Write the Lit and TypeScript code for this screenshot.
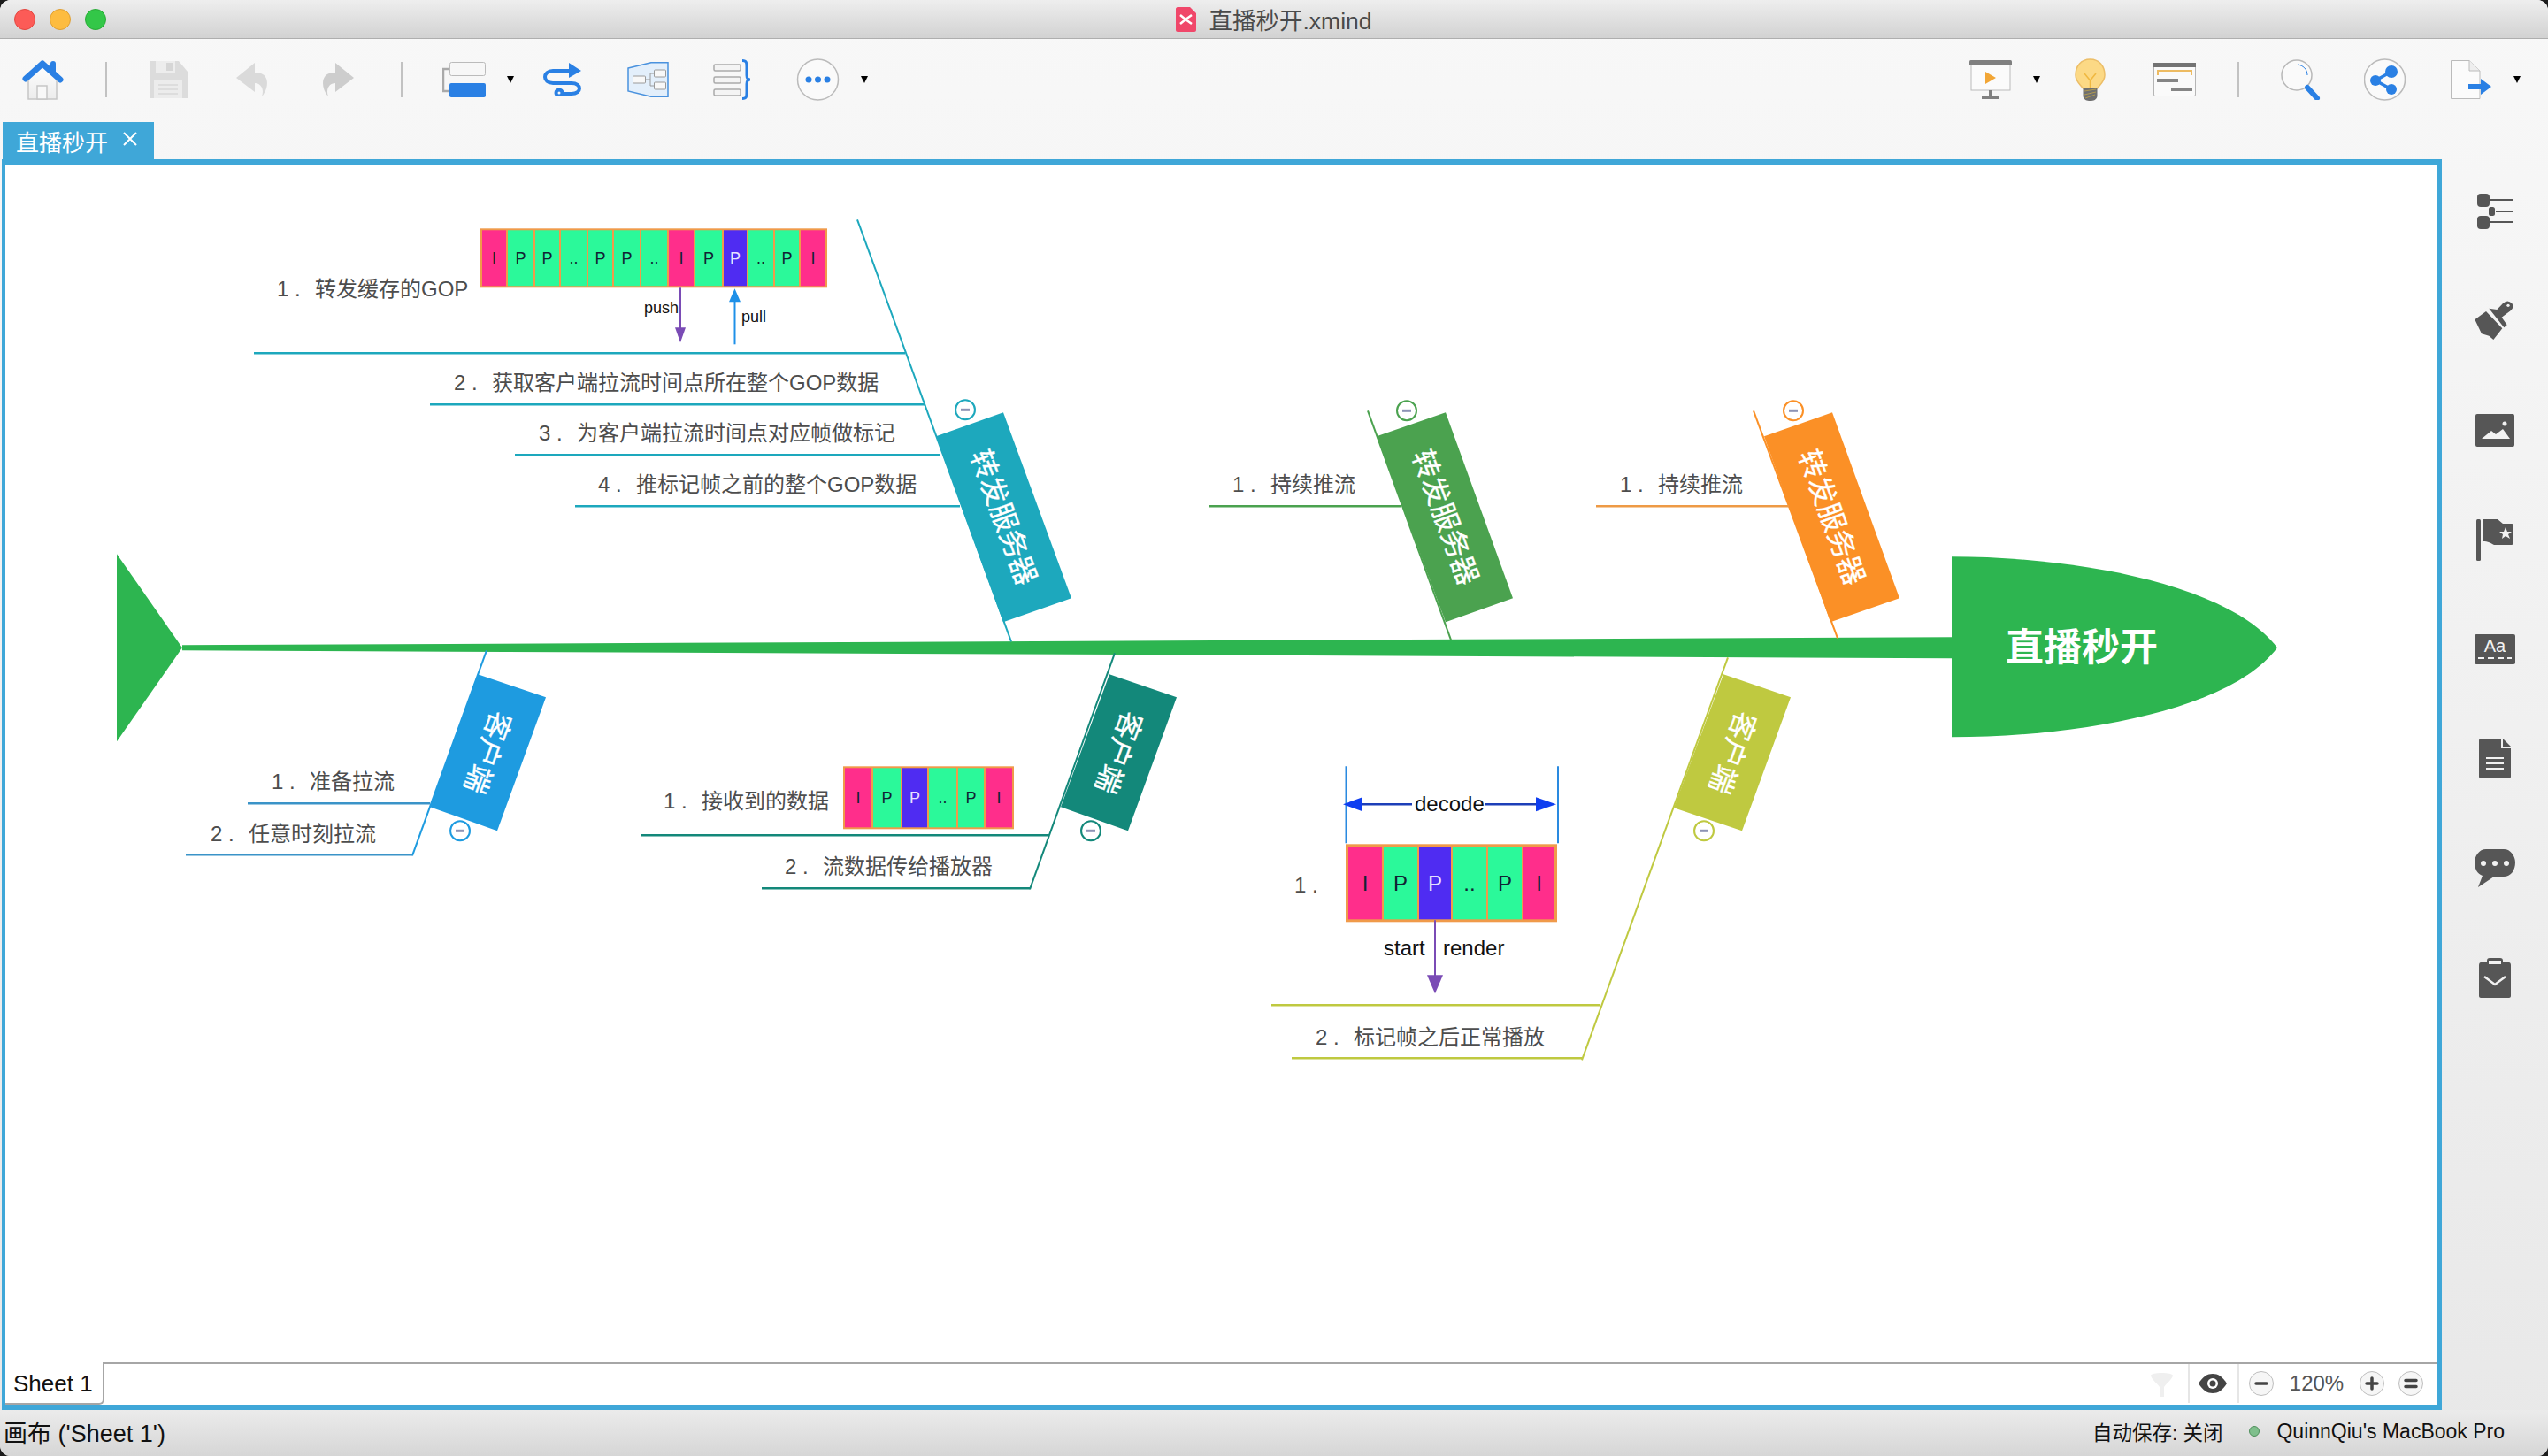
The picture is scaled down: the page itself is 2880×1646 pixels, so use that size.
import { LitElement, html, svg, css } from 'lit';
import { customElement } from 'lit/decorators.js';

const BLUE = '#2a80e4';
const caret = svg`<svg width="8" height="8" viewBox="0 0 8 8"><path d="M0 0H8L4 8Z" fill="#000"/></svg>`;
const sep = html`<div class="sep"></div>`;

const homeIcon = svg`<svg width="49" height="46" viewBox="0 0 49 46">
  <defs><linearGradient id="hb" x1="0" y1="0" x2="0" y2="1"><stop offset="0" stop-color="#fff"/><stop offset="1" stop-color="#ececec"/></linearGradient></defs>
  <path d="M7 18 23 5 39 18V45H7Z" fill="url(#hb)" stroke="#c6c6c6" stroke-width="1.500"/>
  <rect x="17" y="30" width="11" height="15" fill="#f8f8f8" stroke="#c6c6c6" stroke-width="1.500"/>
  <path d="M35 5V14" stroke="${BLUE}" stroke-width="6" stroke-linecap="round"/>
  <path d="M4 22 23 5 43 23" fill="none" stroke="${BLUE}" stroke-width="7" stroke-linecap="round" stroke-linejoin="round"/>
</svg>`;
const saveIcon = svg`<svg width="44" height="42" viewBox="0 0 44 42">
  <path d="M1 0H34L44 12V42H1Z" fill="#dcdcdc"/>
  <rect x="8" y="0" width="22" height="13" fill="#ededed"/><rect x="20" y="2" width="7" height="9" fill="#d6d6d6"/>
  <rect x="6" y="21" width="32" height="21" fill="#ececec"/>
  <path d="M11 27H33M11 32H33M11 37H33" stroke="#d8d8d8" stroke-width="1.5"/>
</svg>`;
const undoIcon = svg`<svg width="38" height="38" viewBox="0 0 38 38"><path d="M21 0 0 17 21 33V23C28 23 32 30 29 38 38 28 38 10 21 11Z" fill="#dadada"/></svg>`;
const redoIcon = svg`<svg width="37" height="38" viewBox="0 0 37 38"><path d="M16 0 37 17 16 33V23C9 23 5 30 8 38-1 28-1 10 16 11Z" fill="#cdcdcd"/></svg>`;
const topicIcon = svg`<svg width="49" height="40" viewBox="0 0 49 40">
  <path d="M8 8H1V33H8" fill="none" stroke="#aaa" stroke-width="2.5"/>
  <rect x="8.5" y="0.5" width="40" height="15" rx="2" fill="#f7f7f7" stroke="#bbb"/>
  <rect x="8" y="24" width="41" height="16" rx="2" fill="${BLUE}"/>
</svg>`;
const relIcon = svg`<svg width="44" height="38" viewBox="0 0 44 38" fill="none" stroke="${BLUE}" stroke-width="4">
  <path d="M30 9H11C-1 9-1 23 11 23H32C44 23 44 35 32 35H22"/><circle cx="18" cy="34" r="3.5"/>
  <path d="M29 0 43 9 29 17Z" fill="${BLUE}" stroke="none"/>
</svg>`;
const boundaryIcon = svg`<svg width="47" height="40" viewBox="0 0 47 40">
  <path d="M1 7 27 .7H46V39.3H27L1 33Z" fill="#e3effb" stroke="#4a92de" stroke-width="1.5"/>
  <g fill="#f8f8f8" stroke="#9a9a9a"><rect x="6.500" y="16" width="14" height="8" rx="1"/><rect x="30.500" y="9" width="13" height="8" rx="1"/><rect x="30.500" y="23" width="13" height="8" rx="1"/></g>
  <path d="M21 20H26M26 13V27M26 13H30M26 27H30" fill="none" stroke="#9a9a9a"/>
</svg>`;
const summaryIcon = svg`<svg width="43" height="46" viewBox="0 0 43 46">
  <g fill="#f4f4f4" stroke="#aaa" stroke-width="1.5"><rect x="1" y="6" width="30" height="7" rx="1.500"/><rect x="1" y="20" width="30" height="7" rx="1.500"/><rect x="1" y="34" width="30" height="7" rx="1.500"/></g>
  <path d="M33 1.500C38 1.500 38 4 38 9V18C38 21 39 23 42 23 39 23 38 25 38 28V37C38 42 38 44.500 33 44.500" fill="none" stroke="${BLUE}" stroke-width="3"/>
</svg>`;
const moreIcon = svg`<svg width="49" height="48" viewBox="0 0 49 48">
  <circle cx="24.500" cy="24" r="23" fill="#fafafa" stroke="#bbb" stroke-width="1.500"/>
  <g fill="${BLUE}"><circle cx="14" cy="24" r="3.500"/><circle cx="24.500" cy="24" r="3.500"/><circle cx="35" cy="24" r="3.500"/></g>
</svg>`;
const presentIcon = svg`<svg width="48" height="44" viewBox="0 0 48 44">
  <rect x="2" y="4" width="44" height="30" fill="#fbfbfb" stroke="#bbb"/><rect width="48" height="6" rx="1.500" fill="#808080"/>
  <path d="M18 13 30 20 18 27Z" fill="#f2a636"/><path d="M22 34H26V41H22ZM14 41H34V44H14Z" fill="#808080"/>
</svg>`;
const bulbIcon = svg`<svg width="35" height="48" viewBox="0 0 35 48">
  <path d="M17.500 1C7 1 1 9 1 19 1 26 6 29 9.500 34H25.500C29 29 34 26 34 19 34 9 28 1 17.500 1Z" fill="#fcd985" stroke="#ecbe68" stroke-width="1.500"/>
  <path d="M11 17 17.500 25 24 17M17.500 25V34" fill="none" stroke="#f0b840" stroke-width="1.500"/>
  <path d="M9.500 34H25.500V42C25.500 47 21 48 17.500 48 14 48 9.500 47 9.500 42Z" fill="#6f6f6f"/>
  <path d="M11 37 24 35M11 41 24 38M12 45 23 41" stroke="#b09a50" stroke-width="1"/>
</svg>`;
const outlineIcon = svg`<svg width="48" height="38" viewBox="0 0 48 38">
  <rect x=".5" y=".5" width="47" height="37" rx="1.500" fill="#fafafa" stroke="#b5b5b5"/><rect width="48" height="5" fill="#737373"/>
  <path d="M5 14V9H43V14" fill="none" stroke="#edbb62" stroke-width="2"/>
  <rect x="4" y="18" width="24" height="4" fill="#858585"/><rect x="20" y="28" width="24" height="4" fill="#858585"/>
</svg>`;
const searchIcon = svg`<svg width="45" height="46" viewBox="0 0 45 46">
  <circle cx="18" cy="18" r="17" fill="#fafafa" stroke="#b8b8b8" stroke-width="1.500"/>
  <path d="M19 6C25 7 30 11 30 18" fill="none" stroke="${BLUE}" stroke-width="1"/>
  <path d="M30 32 41 44" stroke="${BLUE}" stroke-width="6" stroke-linecap="round"/>
</svg>`;
const shareIcon = svg`<svg width="47" height="48" viewBox="0 0 47 48">
  <circle cx="23.500" cy="24" r="23" fill="#fafafa" stroke="#bbb" stroke-width="1.500"/>
  <g fill="${BLUE}"><circle cx="31" cy="15" r="7"/><circle cx="13" cy="25" r="6"/><circle cx="31" cy="35" r="6"/></g>
  <path d="M31 15 13 25 31 35" fill="none" stroke="${BLUE}" stroke-width="3.500"/>
</svg>`;
const exportIcon = svg`<svg width="46" height="44" viewBox="0 0 46 44">
  <path d="M.5 .5H21L33 12V43.500H.5Z" fill="#fbfbfb" stroke="#bbb"/><path d="M21 .5V12H33" fill="#eee" stroke="#bbb"/>
  <path d="M20 27H34V21L46 30 34 39V33H20Z" fill="${BLUE}"/>
</svg>`;

const leftTools = [
  { gap: 25, el: homeIcon }, { gap: 45, el: sep }, { gap: 47, el: saveIcon }, { gap: 55, el: undoIcon },
  { gap: 58, el: redoIcon }, { gap: 53, el: sep }, { gap: 45, el: topicIcon }, { gap: 24, el: caret },
  { gap: 33, el: relIcon }, { gap: 51, el: boundaryIcon }, { gap: 50, el: summaryIcon },
  { gap: 51, el: moreIcon }, { gap: 24, el: caret },
];
const rightTools = [
  { gap: 0, el: presentIcon }, { gap: 24, el: caret }, { gap: 39, el: bulbIcon }, { gap: 54, el: outlineIcon },
  { gap: 47, el: sep }, { gap: 47, el: searchIcon }, { gap: 49, el: shareIcon }, { gap: 51, el: exportIcon },
  { gap: 25, el: caret },
];

const DK = '#565656';
const sideIcons = [
  svg`<svg width="40" height="40" viewBox="0 0 40 40" fill="${DK}">
    <rect y="0" width="14" height="15" rx="4"/><rect y="25" width="14" height="15" rx="4"/><rect x="13" y="15" width="7" height="10" rx="2.500"/>
    <path d="M15 6H40V8H15ZM21 19H40V21H21ZM15 31H40V33H15Z"/></svg>`,
  svg`<svg width="70" height="70" viewBox="0 0 210 210" fill="${DK}">
    <path d="M37 100 75 72 130 130 100 168 85 155 60 148Z"/>
    <path d="M85 62 112 66 132 45Q148 30 163 45 172 58 158 70L128 92 146 118 136 127Z"/>
    <circle cx="150" cy="52" r="5" fill="#f2f2f2"/></svg>`,
  svg`<svg width="44" height="37" viewBox="0 0 44 37"><rect width="44" height="37" rx="2" fill="${DK}"/>
    <path d="M7 28 18 19 23 23 31 17 39 28Z" fill="#f2f2f2"/><circle cx="33" cy="11" r="2.500" fill="#f2f2f2"/></svg>`,
  svg`<svg width="42" height="47" viewBox="0 0 42 47" fill="${DK}"><rect width="5" height="47" rx="1.500"/>
    <path d="M7 0H24L30 5H40C42 5 42 6 42 8V26C42 28 41 29 40 29H20C16 27 14 25 7 25Z"/>
    <path d="M33 9 35 14H40L36 17 38 22 33 19 29 22 30 17 26 14H31Z" fill="#f2f2f2"/></svg>`,
  svg`<svg width="46" height="34" viewBox="0 0 46 34"><rect width="46" height="34" rx="2" fill="${DK}"/>
    <text x="23" y="20" text-anchor="middle" class="aa">Aa</text>
    <path d="M4 27H42" stroke="#f2f2f2" stroke-width="2" stroke-dasharray="7 4"/></svg>`,
  svg`<svg width="36" height="45" viewBox="0 0 36 45"><path d="M2 0H25V11H36V43C36 44 35 45 34 45H2C1 45 0 44 0 43V2C0 1 1 0 2 0Z" fill="${DK}"/>
    <path d="M27 0 36 9H27Z" fill="${DK}"/><path d="M8 22H28M8 28H28M8 34H28" stroke="#f2f2f2" stroke-width="2"/></svg>`,
  svg`<svg width="46" height="43" viewBox="0 0 46 43"><path d="M13 0H33C41 0 46 8 46 15 46 24 41 31 33 31H22L4 43 9 30C3 28 0 22 0 15 0 8 5 0 13 0Z" fill="${DK}"/>
    <circle cx="10" cy="16" r="3" fill="#f2f2f2"/><circle cx="23" cy="16" r="3" fill="#f2f2f2"/><circle cx="36" cy="16" r="3" fill="#f2f2f2"/></svg>`,
  svg`<svg width="36" height="45" viewBox="0 0 36 45"><path d="M2 5H9V3C9 1 10 0 12 0H24C26 0 27 1 27 3V5H34C35 5 36 6 36 8V43C36 44 35 45 34 45H2C1 45 0 44 0 43V8C0 6 1 5 2 5Z" fill="${DK}"/>
    <rect x="11" y="3" width="14" height="4" fill="#f2f2f2"/><path d="M6 21 18 30 30 21" fill="none" stroke="#f2f2f2" stroke-width="2.500"/></svg>`,
];

const funnelIcon = svg`<svg width="27" height="27" viewBox="0 0 27 27"><path d="M1 3C1-1 26-1 26 3 26 6 17 14 16 16V27H11V16C10 14 1 6 1 3Z" fill="#efefef"/></svg>`;
const eyeIcon = svg`<svg width="32" height="22" viewBox="0 0 32 22"><path d="M0 11C5 3 10 0 16 0 22 0 27 3 32 11 27 19 22 22 16 22 10 22 5 19 0 11Z" fill="#444"/>
  <circle cx="16" cy="11" r="6" fill="#fff"/><circle cx="16" cy="11" r="3.500" fill="#444"/></svg>`;
const zoomBtn = (d: string) => svg`<svg width="28" height="28" viewBox="0 0 28 28"><circle cx="14" cy="14" r="13.500" fill="#f6f6f6" stroke="#bdbdbd"/>
  <path d="${d}" stroke="#444" stroke-width="3.500" stroke-linecap="round"/></svg>`;

type Item = { n: string; x: number; y: number; t: string };
type Seg = [number, number, number];
type Bone = {
  color: string; line?: string; spine: number[]; quad: number[][]; dot: number[];
  label: string; size: number; angle: number; segs: Seg[]; items: Item[];
};

const bones: Bone[] = [
  {
    color: '#1da8bd', spine: [968, 248, 1142, 725], quad: [[1057, 493], [1133, 466], [1210, 676], [1133, 703]], dot: [1090, 463],
    label: '转发服务器', size: 32, angle: 70,
    segs: [[286, 1022, 399], [485, 1044, 457], [581, 1062, 514], [649, 1084, 572]],
    items: [
      { n: '1', x: 312, y: 326, t: '转发缓存的GOP' },
      { n: '2', x: 512, y: 432, t: '获取客户端拉流时间点所在整个GOP数据' },
      { n: '3', x: 608, y: 489, t: '为客户端拉流时间点对应帧做标记' },
      { n: '4', x: 675, y: 547, t: '推标记帧之前的整个GOP数据' },
    ],
  },
  {
    color: '#4ba24f', spine: [1545, 464, 1639, 723], quad: [[1555, 493], [1633, 466], [1709, 676], [1633, 703]], dot: [1589, 464],
    label: '转发服务器', size: 32, angle: 70, segs: [[1366, 1583, 572]],
    items: [{ n: '1', x: 1392, y: 547, t: '持续推流' }],
  },
  {
    color: '#fb9026', line: '#ee9a45', spine: [1981, 464, 2076, 721], quad: [[1993, 493], [2070, 466], [2146, 676], [2068, 703]], dot: [2026, 464],
    label: '转发服务器', size: 32, angle: 70, segs: [[1803, 2021, 572]],
    items: [{ n: '1', x: 1830, y: 547, t: '持续推流' }],
  },
  {
    color: '#1e9be0', line: '#3a93c8', spine: [549, 735, 465, 967], quad: [[539, 762], [616, 788], [561, 939], [485, 912]], dot: [519, 939],
    label: '客户端', size: 32, angle: 110, segs: [[279, 485, 908], [209, 465, 966]],
    items: [{ n: '1', x: 306, y: 883, t: '准备拉流' }, { n: '2', x: 237, y: 942, t: '任意时刻拉流' }],
  },
  {
    color: '#13887a', spine: [1259, 738, 1163, 1005], quad: [[1253, 762], [1329, 788], [1274, 939], [1198, 912]], dot: [1232, 939],
    label: '客户端', size: 32, angle: 110, segs: [[723, 1185, 944], [860, 1163, 1004]],
    items: [{ n: '1', x: 749, y: 905, t: '接收到的数据' }, { n: '2', x: 886, y: 979, t: '流数据传给播放器' }],
  },
  {
    color: '#bfc940', spine: [1952, 743, 1787, 1198], quad: [[1947, 762], [2023, 788], [1968, 939], [1891, 913]], dot: [1925, 939],
    label: '客户端', size: 32, angle: 110, segs: [[1436, 1808, 1136], [1459, 1787, 1196]],
    items: [{ n: '1', x: 1462, y: 1000, t: '' }, { n: '2', x: 1486, y: 1172, t: '标记帧之后正常播放' }],
  },
];

const frames = (x: number, y: number, h: number, edges: number[], labels: string[], fs: number, bw: number) => svg`
  <rect x="${x}" y="${y}" width="${edges[edges.length - 1] - x}" height="${h}" fill="#f09a4a"/>
  ${labels.map((l, i) => {
    const fill = l === 'I' ? '#ff2e8b' : l === 'B' ? '#4f2cf2' : '#2bf99a';
    const x0 = edges[i] + (i === 0 ? bw : 1);
    const x1 = edges[i + 1] - (i === labels.length - 1 ? bw : 1);
    return svg`<rect x="${x0}" y="${y + bw}" width="${x1 - x0}" height="${h - bw * 2}" fill="${fill}"/>
      <text class="cell" x="${(x0 + x1) / 2}" y="${y + h / 2}" font-size="${fs}" fill="${l === 'B' ? '#e6e0ff' : '#123'}">${l === 'B' ? 'P' : l}</text>`;
  })}`;

@customElement('app-root')
export class AppRoot extends LitElement {
  static override styles = css`
    :host {
      display: block;
      width: 2880px;
      height: 1646px;
      background: #1c1c1c;
      font-family: 'Liberation Sans', 'Noto Sans CJK SC', sans-serif;
    }
    .window {
      height: 100%;
      display: flex;
      flex-direction: column;
      border-radius: 12px;
      overflow: hidden;
      background: linear-gradient(#f8f8f8, #e8e8e8);
    }
    .titlebar {
      height: 43px;
      flex: none;
      display: flex;
      align-items: center;
      justify-content: center;
      gap: 14px;
      position: relative;
      background: linear-gradient(#eeeeee, #d2d2d2);
      border-bottom: 1px solid #aeaeae;
      font-size: 26.5px;
      color: #4a4a4a;
    }
    .lights {
      position: absolute;
      left: 16px;
      top: 10px;
      display: flex;
      gap: 16px;
    }
    .lights i {
      width: 24px;
      height: 24px;
      border-radius: 50%;
      box-sizing: border-box;
    }
    .red { background: #fc5b57; border: 1px solid #e2463f; }
    .amber { background: #fdbc40; border: 1px solid #de9f34; }
    .green { background: #33c748; border: 1px solid #27aa35; }
    .toolbar {
      height: 92px;
      flex: none;
      display: flex;
      align-items: center;
      justify-content: space-between;
      padding-right: 31px;
    }
    .group {
      display: flex;
      align-items: center;
    }
    .group svg, .side svg, .sheet svg { display: block; }
    .sep {
      width: 2px;
      height: 40px;
      background: #c2c2c2;
    }
    .main {
      flex: 1;
      display: flex;
      min-height: 0;
    }
    .work {
      width: 2760px;
      flex: none;
      display: flex;
      flex-direction: column;
      padding-left: 2px;
      box-sizing: border-box;
    }
    .tab {
      align-self: flex-start;
      margin: 2px 0 0 1px;
      width: 171px;
      height: 42px;
      box-sizing: border-box;
      background: #3fa7d8;
      color: #fff;
      font-size: 26px;
      display: flex;
      align-items: center;
      padding-left: 15px;
      gap: 17px;
    }
    .tab svg { margin-top: -4px; }
    .frame {
      flex: 1;
      display: flex;
      flex-direction: column;
      background: #fff;
      border: 6px solid #3fa7d8;
      border-left-width: 4px;
      min-height: 0;
    }
    .canvas {
      display: block;
      flex: 1;
      min-height: 0;
    }
    .sheet {
      height: 48px;
      flex: none;
      display: flex;
      align-items: stretch;
      box-sizing: border-box;
      border-top: 2px solid #a6a6a6;
    }
    .sheet-tab {
      width: 112px;
      margin-top: -2px;
      background: #fff;
      box-sizing: border-box;
      border-right: 2px solid #a6a6a6;
      border-bottom: 2px solid #a6a6a6;
      border-bottom-right-radius: 6px;
      font-size: 26px;
      color: #111;
      padding: 9px 0 0 9px;
    }
    .sheet-rest {
      flex: 1;
      display: flex;
      align-items: center;
      justify-content: flex-end;
    }
    .cellbox {
      height: 44px;
      align-self: flex-start;
      display: flex;
      align-items: center;
      justify-content: center;
      border-left: 2px solid #e6e6e6;
      box-sizing: border-box;
    }
    .eye { width: 56px; padding-right: 2px; }
    .zoom { width: 225px; justify-content: flex-start; padding-left: 11px; }
    .pct { width: 97px; text-align: center; font-size: 24px; color: #555; }
    .zoom svg:last-child { margin-left: 16px; }
    .side {
      flex: 1;
      padding-top: 41px;
    }
    .side div {
      height: 123.8px;
      display: flex;
      align-items: center;
      justify-content: center;
    }
    .status {
      height: 52px;
      flex: none;
      display: flex;
      align-items: center;
      justify-content: space-between;
      padding: 0 49px 4px 4px;
      box-sizing: border-box;
      background: linear-gradient(#ebebeb, #d6d6d6);
      font-size: 23px;
      color: #111;
    }
    .status .canvas-name { font-size: 27px; }
    .status-right {
      display: flex;
      align-items: center;
    }
    .autosave { font-size: 22.500px; }
    .dot {
      width: 12px;
      height: 12px;
      margin: 0 19px 0 30px;
      border-radius: 50%;
      background: #7fbf8c;
      border: 1px solid #4f8f5c;
      box-sizing: border-box;
    }
    text { font-family: 'Liberation Sans', 'Noto Sans CJK SC', sans-serif; }
    .aa { font-size: 20px; fill: #f2f2f2; }
    .item { font-size: 24px; fill: #4d4d4d; dominant-baseline: central; }
    .label { fill: #fff; stroke: #fff; stroke-width: 0.3px; text-anchor: middle; dominant-baseline: central; }
    .cell { text-anchor: middle; dominant-baseline: central; }
    .note { font-size: 18px; fill: #111; dominant-baseline: central; }
    .note.big { font-size: 24px; }
    .center { font-size: 43px; font-weight: 700; fill: #fff; dominant-baseline: central; }
  `;

  private renderBone(b: Bone) {
    const ln = b.line ?? b.color;
    const [cx, cy] = [
      b.quad.reduce((s, p) => s + p[0], 0) / 4,
      b.quad.reduce((s, p) => s + p[1], 0) / 4,
    ];
    return svg`
      <line x1="${b.spine[0]}" y1="${b.spine[1]}" x2="${b.spine[2]}" y2="${b.spine[3]}" stroke="${b.color}" stroke-width="2"/>
      ${b.segs.map(([x1, x2, y]) => svg`<line x1="${x1}" x2="${x2}" y1="${y}" y2="${y}" stroke="${ln}" stroke-width="2.500"/>`)}
      <polygon points="${b.quad.map((p) => p.join(',')).join(' ')}" fill="${b.color}"/>
      <text class="label" font-size="${b.size}" transform="translate(${cx} ${cy}) rotate(${b.angle})">${b.label}</text>
      <circle cx="${b.dot[0]}" cy="${b.dot[1]}" r="11" fill="#fff" stroke="${b.color}" stroke-width="2"/>
      <path d="M${b.dot[0] - 5} ${b.dot[1]}h10" stroke="#8d93b5" stroke-width="3"/>
      ${b.items.map((it) => svg`<text class="item" x="${it.x}" y="${it.y}">${it.n} .</text>
        ${it.t ? svg`<text class="item" x="${it.x + 43}" y="${it.y}">${it.t}</text>` : ''}`)}
    `;
  }

  private renderDiagram() {
    // viewBox is in window coordinates, nudged to line up with the map's own origin
    return svg`<svg class="canvas" viewBox="5 185.700 2748 1354" preserveAspectRatio="xMinYMin">
      <polygon points="131,626 205,732 131,838" fill="#2db550"/>
      <polygon points="205,729 2205,720 2205,744 205,735" fill="#2db550"/>
      ${bones.map((b) => this.renderBone(b))}
      <path d="M2205 629C2344 629 2519 660 2573 732 2519 804 2344 833 2205 833Z" fill="#2db550"/>
      <text class="center" x="2266" y="732">直播秒开</text>

      ${frames(542, 258, 67, [542, 572, 603, 632, 663, 692, 723, 754, 784, 816, 844, 874, 903, 934],
        ['I', 'P', 'P', '..', 'P', 'P', '..', 'I', 'P', 'B', '..', 'P', 'I'], 18, 2)}
      <path d="M768 325V372" stroke="#7a4bb5" stroke-width="2"/><path d="M762 370H774L768 387Z" fill="#7a4bb5"/>
      <text class="note" x="727" y="348">push</text>
      <path d="M829.500 389V340" stroke="#1e90e8" stroke-width="2"/><path d="M823 341H836L829.500 326Z" fill="#1e90e8"/>
      <text class="note" x="837" y="358">pull</text>

      ${frames(952, 866, 71, [952, 985, 1018, 1048, 1081, 1112, 1145], ['I', 'P', 'B', '..', 'P', 'I'], 18, 2)}

      ${frames(1520, 954, 88, [1520, 1562, 1602, 1640, 1680, 1720, 1759], ['I', 'P', 'B', '..', 'P', 'I'], 24, 3)}
      <path d="M1520.500 866V953M1760 866V953" stroke="#2a8ae0" stroke-width="2"/>
      <path d="M1539 909H1595M1678 909H1736" stroke="#1d3fb8" stroke-width="2.500"/>
      <path d="M1517 909 1539 901V917ZM1758 909 1735 901V917Z" fill="#0f3ef0"/>
      <text class="note big" x="1598" y="908">decode</text>
      <path d="M1621 1040V1104" stroke="#7a4bb5" stroke-width="2"/><path d="M1612 1102H1630L1621 1123Z" fill="#7a4bb5"/>
      <text class="note big" x="1563" y="1071">start</text>
      <text class="note big" x="1630" y="1071">render</text>
    </svg>`;
  }

  override render() {
    return html`
      <div class="window">
        <div class="titlebar">
          <div class="lights"><i class="red"></i><i class="amber"></i><i class="green"></i></div>
          <svg width="23" height="28" viewBox="0 0 23 28"><path d="M2 0H16L23 7V26C23 27 22 28 21 28H2C1 28 0 27 0 26V2C0 1 1 0 2 0Z" fill="#f0476a"/>
            <path d="M5 9 11 14 18 9M5 19 11 14 18 19" fill="none" stroke="#fff" stroke-width="2.500"/></svg>
          <span>直播秒开.xmind</span>
        </div>
        <div class="toolbar">
          <div class="group">${leftTools.map((t) => html`<div style="margin-left:${t.gap}px">${t.el}</div>`)}</div>
          <div class="group">${rightTools.map((t) => html`<div style="margin-left:${t.gap}px">${t.el}</div>`)}</div>
        </div>
        <div class="main">
          <div class="work">
            <div class="tab">
              <span>直播秒开</span>
              <svg width="16" height="16" viewBox="0 0 16 16"><path d="M1 1 15 15M15 1 1 15" stroke="#fff" stroke-width="2"/></svg>
            </div>
            <div class="frame">
              ${this.renderDiagram()}
              <div class="sheet">
                <div class="sheet-tab">Sheet 1</div>
                <div class="sheet-rest">
                  ${funnelIcon}
                  <div style="width:16px"></div>
                  <div class="cellbox eye">${eyeIcon}</div>
                  <div class="cellbox zoom">
                    ${zoomBtn('M8 14H20')}
                    <span class="pct">120%</span>
                    ${zoomBtn('M8 14H20M14 8V20')}
                    ${zoomBtn('M8 10.500H20M8 17.500H20')}
                  </div>
                </div>
              </div>
            </div>
          </div>
          <div class="side">${sideIcons.map((i) => html`<div>${i}</div>`)}</div>
        </div>
        <div class="status">
          <span class="canvas-name">画布 ('Sheet 1')</span>
          <div class="status-right"><span class="autosave">自动保存: 关闭</span><i class="dot"></i><span>QuinnQiu's MacBook Pro</span></div>
        </div>
      </div>
    `;
  }
}
